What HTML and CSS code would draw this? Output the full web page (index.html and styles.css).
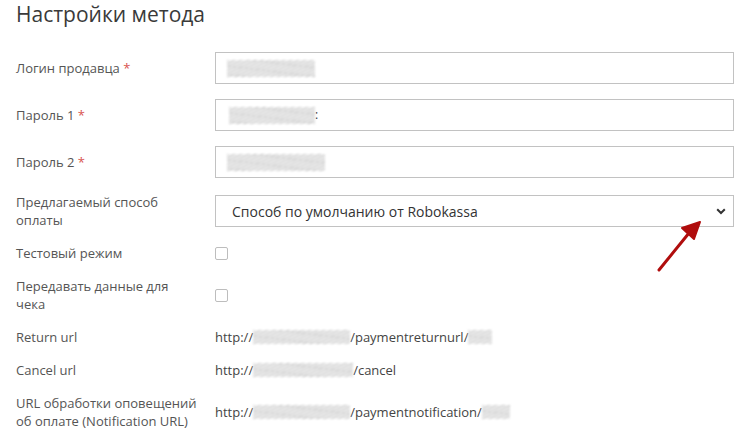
FILE: index.html
```html
<!DOCTYPE html>
<html lang="ru">
<head>
    <meta charset="UTF-8">
    <meta name="viewport" content="width=device-width, initial-scale=1.0">
    <title>Настройки метода</title>
    <link rel="stylesheet" href="styles.css">
</head>
<body>
    <div class="container">
        <h1 class="title">Настройки метода</h1>

        <div class="form">
            <label class="label">Логин продавца <span class="req">*</span></label>
            <div class="field">
                <div class="input"><span class="blur blur-login"></span></div>
            </div>

            <label class="label">Пароль 1 <span class="req">*</span></label>
            <div class="field">
                <div class="input"><span class="blur blur-pass1"></span><span class="tail">:</span></div>
            </div>

            <label class="label">Пароль 2 <span class="req">*</span></label>
            <div class="field">
                <div class="input"><span class="blur blur-pass2"></span></div>
            </div>

            <label class="label">Предлагаемый способ оплаты</label>
            <div class="field select-wrap">
                <select class="select">
                    <option>Способ по умолчанию от Robokassa</option>
                </select>
                <svg class="chevron" width="10" height="7" viewBox="0 0 10 7">
                    <path d="M1.2 1.2 L5 5 L8.8 1.2" fill="none" stroke="#333" stroke-width="2"/>
                </svg>
            </div>

            <label class="label">Тестовый режим</label>
            <div class="field"><input type="checkbox" class="check"></div>

            <label class="label">Передавать данные для чека</label>
            <div class="field"><input type="checkbox" class="check"></div>

            <div class="label">Return url</div>
            <div class="field url">http://<span class="blur blur-host"></span>/paymentreturnurl/<span class="blur blur-id"></span></div>

            <div class="label">Cancel url</div>
            <div class="field url">http://<span class="blur blur-host-long"></span>/cancel</div>

            <div class="label">URL обработки оповещений об оплате (Notification URL)</div>
            <div class="field url">http://<span class="blur blur-host"></span>/paymentnotification/<span class="blur blur-id-wide"></span></div>
        </div>
    </div>

    <!-- annotation arrow -->
    <svg class="pointer" width="740" height="437" viewBox="0 0 740 437">
        <path d="M659 270 L689 233" stroke="#b00d0d" stroke-width="3" stroke-linecap="round"/>
        <path d="M700 222 L682 228 L694 239 Z" fill="#b00d0d" stroke="#b00d0d" stroke-width="2" stroke-linejoin="round"/>
    </svg>
</body>
</html>
```

FILE: styles.css
```css
:root {
    --text-color: #333;
    --label-color: #555;
    --border-color: #c2c2c2;
    --req-color: #d9534f;
}

body {
    margin: 0;
    padding: 0;
    background: #fff;
    color: var(--text-color);
    font-family: 'Open Sans', 'Noto Sans', sans-serif;
    font-size: 13px;
    line-height: 18px;
}

.container {
    padding: 0 6px 0 16px;
}

.title {
    margin: 0 0 24px;
    font-size: 21px;
    font-weight: 400;
    line-height: 28px;
    color: #3a3a3a;
}

.form {
    display: grid;
    grid-template-columns: 181px 1fr;
    column-gap: 18px;
    row-gap: 15px;
    align-items: center;
}

.label {
    color: var(--label-color);
}

.req {
    color: var(--req-color);
}

.field {
    display: flex;
    align-items: center;
}

.input {
    box-sizing: border-box;
    width: 100%;
    height: 32px;
    border: 1px solid var(--border-color);
    padding: 0 10px;
    display: flex;
    align-items: center;
}

.tail {
    font-size: 12px;
    color: #333;
}

.select-wrap {
    position: relative;
}

.select {
    box-sizing: border-box;
    width: 100%;
    height: 32px;
    border: 1px solid var(--border-color);
    border-radius: 0;
    background: #fff;
    padding: 0 30px 0 16px;
    font-family: inherit;
    font-size: 14px;
    color: var(--text-color);
    appearance: none;
    -webkit-appearance: none;
}

.chevron {
    position: absolute;
    right: 8px;
    top: 13px;
}

.check {
    appearance: none;
    -webkit-appearance: none;
    box-sizing: border-box;
    width: 13px;
    height: 13px;
    margin: 0;
    border: 1px solid #bdbdbd;
    border-radius: 2px;
    background: #fff;
}

.url {
    color: #444;
    white-space: nowrap;
}

/* smudged-out secrets */
.blur {
    display: inline-block;
    height: 14px;
    background: repeating-linear-gradient(155deg, #b8b8b8 0 1px, #ececec 1px 3px);
    filter: blur(0.8px);
    opacity: 0.8;
}

.blur-login { width: 88px; height: 17px; margin-left: 1px; }
.blur-pass1 { width: 86px; height: 17px; margin-left: 3px; }
.blur-pass2 { width: 98px; height: 17px; margin-left: 1px; }
.blur-host { width: 97px; }
.blur-host-long { width: 100px; }
.blur-id { width: 24px; }
.blur-id-wide { width: 28px; }

.pointer {
    position: absolute;
    left: 0;
    top: 0;
    pointer-events: none;
}
```
